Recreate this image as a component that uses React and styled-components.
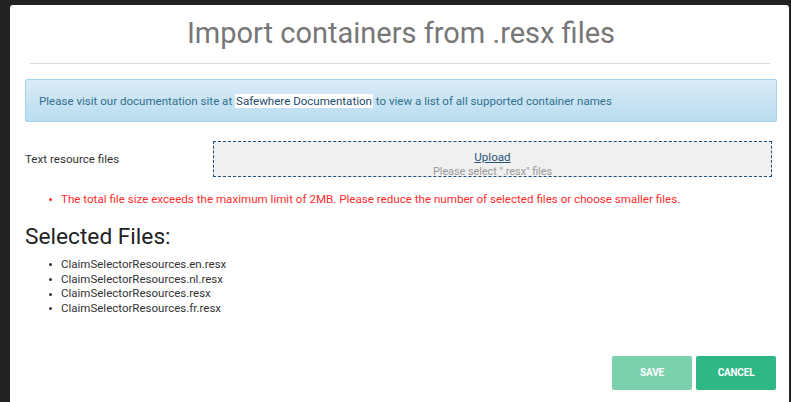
import React from 'react'
import styled, { createGlobalStyle } from 'styled-components'

const GlobalStyle = createGlobalStyle`
  html, body {
    margin: 0;
    padding: 0;
    background: #222222;
    font-family: Roboto, "Liberation Sans", sans-serif;
    overflow: hidden;
  }
`

const Page = styled.div`
  padding: 5px 2px 0 10px;
`

const Modal = styled.div`
  background: #fff;
  border-radius: 3px;
  min-height: 420px;
  padding: 11px 12px 0 15px;
  box-sizing: border-box;
`

const Title = styled.h1`
  margin: 0;
  font-size: 29px;
  line-height: 35px;
  font-weight: 400;
  color: #777;
  text-align: center;
`

const Divider = styled.hr`
  margin: 12px 7px 0 5px;
  border: 0;
  border-top: 1px solid #dcdcdc;
`

const Alert = styled.div`
  margin-top: 15px;
  height: 43px;
  box-sizing: border-box;
  display: flex;
  align-items: center;
  padding: 0 13px;
  border: 1px solid #a3d3ec;
  border-radius: 2px;
  background: linear-gradient(to bottom, #dbeaf7 0%, #b9def0 100%);
  color: #31708f;
  font-size: 11.55px;
`

const DocLink = styled.span`
  background: #fff;
  color: #1d4a6b;
  padding: 0 1px;
`

const FormRow = styled.div`
  margin-top: 19px;
  display: grid;
  grid-template-columns: 188px 559px;
  align-items: center;
`

const Label = styled.label`
  font-size: 11.6px;
  color: #333;
`

const DropZone = styled.div`
  height: 36px;
  box-sizing: border-box;
  background: #f0f0f0;
  border: 1px dashed #1e4f78;
  display: flex;
  flex-direction: column;
  align-items: center;
  padding-top: 8px;
`

const UploadLink = styled.a`
  font-size: 11.6px;
  line-height: 15px;
  color: #2a5577;
  text-decoration: underline;
  cursor: pointer;
`

const Hint = styled.span`
  font-size: 10.8px;
  line-height: 14px;
  color: #9a9a9a;
`

const BulletList = styled.ul`
  margin: ${p => p.$top} 0 0;
  padding-left: 36px;
  list-style: none;
  color: ${p => p.$color};
  font-size: ${p => p.$size};
  line-height: ${p => p.$line};

  li {
    position: relative;
  }
  li::before {
    content: '';
    position: absolute;
    left: -12px;
    top: 50%;
    width: 3px;
    height: 3px;
    margin-top: -1px;
    border-radius: 50%;
    background: currentColor;
  }
`

const SectionTitle = styled.h2`
  margin: 17px 0 0;
  font-size: 22.7px;
  line-height: 27px;
  font-weight: 400;
  color: #222;
`

const Footer = styled.div`
  margin-top: 40px;
  margin-right: 1px;
  display: flex;
  justify-content: flex-end;
  gap: 4px;
`

const Button = styled.button`
  width: 80px;
  height: 34px;
  border: 0;
  border-radius: 2px;
  background: ${p => (p.$muted ? '#7bd1ae' : '#2fb886')};
  color: #fff;
  font-family: Roboto, "Liberation Sans", sans-serif;
  font-size: 10px;
  font-weight: 700;
  letter-spacing: -0.2px;
  text-transform: uppercase;
  cursor: pointer;
`

const files = [
  'ClaimSelectorResources.en.resx',
  'ClaimSelectorResources.nl.resx',
  'ClaimSelectorResources.resx',
  'ClaimSelectorResources.fr.resx',
]

export default function App() {
  return (
    <Page>
      <GlobalStyle />
      <Modal>
        <Title>Import containers from .resx files</Title>
        <Divider />
        <Alert>
          <span>
            Please visit our documentation site at <DocLink>Safewhere Documentation</DocLink> to view a list of all supported container names
          </span>
        </Alert>
        <FormRow>
          <Label>Text resource files</Label>
          <DropZone>
            <UploadLink>Upload</UploadLink>
            <Hint>Please select ".resx" files</Hint>
          </DropZone>
        </FormRow>
        <BulletList $top="15px" $color="#ff2d2d" $size="11.6px" $line="14px">
          <li>The total file size exceeds the maximum limit of 2MB. Please reduce the number of selected files or choose smaller files.</li>
        </BulletList>
        <SectionTitle>Selected Files:</SectionTitle>
        <BulletList $top="7px" $color="#333" $size="11.5px" $line="14.7px">
          {files.map(f => (
            <li key={f}>{f}</li>
          ))}
        </BulletList>
        <Footer>
          <Button $muted>Save</Button>
          <Button>Cancel</Button>
        </Footer>
      </Modal>
    </Page>
  )
}
